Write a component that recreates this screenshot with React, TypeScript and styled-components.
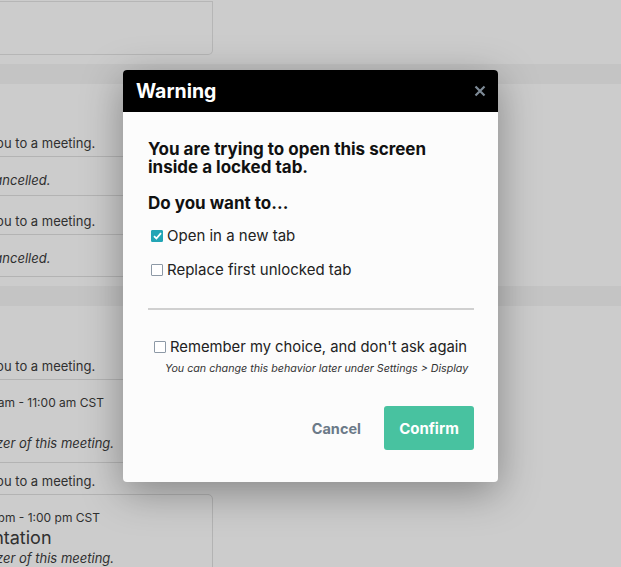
import styled, { createGlobalStyle } from "styled-components";

const GlobalStyle = createGlobalStyle`
  html, body {
    margin: 0;
    padding: 0;
  }
  body {
    font-family: Inter, "Open Sans", sans-serif;
    background: #fff;
    overflow: hidden;
  }
`;

const Page = styled.div`
  position: relative;
  width: 621px;
  height: 567px;
  overflow: hidden;
  background: #fff;
`;

const TopArea = styled.div`
  height: 64px;
  padding-top: 1px;
  box-sizing: border-box;
`;

const TopCard = styled.div`
  width: 213px;
  height: 54px;
  box-sizing: border-box;
  border: 1px solid #e4e4e4;
  border-left: none;
  border-radius: 0 0 5px 0;
`;

const Band = styled.div`
  height: 20px;
  background: #f5f5f5;
`;

/* the feed is scrolled sideways: only its right part shows */
const Feed = styled.div<{ $bottom?: number }>`
  display: flex;
  flex-direction: column;
  width: 355px;
  margin-left: -142px;
  padding-bottom: ${(p) => p.$bottom ?? 0}px;
`;

const DayHeading = styled.div<{ $height: number }>`
  height: ${(p) => p.$height}px;
`;

const InviteRow = styled.div<{ $height: number }>`
  height: ${(p) => p.$height}px;
  display: flex;
  align-items: flex-end;
  padding: 0 14px 5px;
  box-sizing: border-box;
  font-size: 13px;
  line-height: 16px;
  color: #3c3c3c;
  white-space: nowrap;
`;

const EventCard = styled.div<{ $height: number }>`
  height: ${(p) => p.$height}px;
  box-sizing: border-box;
  border: 1px solid #e0e0e0;
  border-radius: 5px;
  padding: 15px 14px 0;
  display: flex;
  flex-direction: column;
  white-space: nowrap;
  color: #3c3c3c;
`;

const Note = styled.div`
  font-size: 13px;
  line-height: 16px;
  font-style: italic;
`;

const Time = styled.div`
  font-size: 12px;
  line-height: 16px;
`;

const EventTitle = styled.div`
  font-size: 18px;
  line-height: 24px;
`;

const Overlay = styled.div`
  position: absolute;
  inset: 0;
  background: rgba(0, 0, 0, 0.2);
  display: flex;
  justify-content: center;
  align-items: flex-start;
  padding-top: 70px;
  box-sizing: border-box;
`;

const Modal = styled.div`
  width: 375px;
  background: #fcfcfc;
  border-radius: 4px;
  box-shadow: 0 10px 40px rgba(0, 0, 0, 0.35);
  overflow: hidden;
`;

const Header = styled.div`
  height: 42px;
  background: #000;
  display: flex;
  align-items: center;
  justify-content: space-between;
  padding: 0 12px 0 13px;
`;

const HeaderTitle = styled.h1`
  margin: 0;
  font-size: 19.5px;
  font-weight: 700;
  color: #fff;
`;

const CloseButton = styled.button`
  border: none;
  background: none;
  padding: 0;
  width: 12px;
  height: 12px;
  display: flex;
  cursor: pointer;
`;

const Body = styled.div`
  padding: 28px 24px 32px 25px;
`;

const Question = styled.p<{ $gap?: number }>`
  margin: ${(p) => p.$gap ?? 0}px 0 0;
  font-size: 17px;
  line-height: 18px;
  font-weight: 700;
  color: #111;
`;

const Options = styled.div`
  display: flex;
  flex-direction: column;
  gap: 14px;
  margin-top: 14px;
`;

const Option = styled.label<{ $indent: number; $size?: number }>`
  display: flex;
  align-items: center;
  gap: 4px;
  padding-left: ${(p) => p.$indent}px;
  font-size: ${(p) => p.$size ?? 15}px;
  line-height: 20px;
  color: #222;
`;

const Box = styled.span<{ $checked?: boolean }>`
  width: 12px;
  height: 12px;
  box-sizing: border-box;
  border-radius: 1px;
  border: 1px solid ${(p) => (p.$checked ? "#23a5b5" : "#8d99a6")};
  background: ${(p) => (p.$checked ? "#23a5b5" : "#fff")};
  display: flex;
  align-items: center;
  justify-content: center;
  flex-shrink: 0;
`;

const Divider = styled.hr`
  margin: 28px 0 27px;
  border: none;
  height: 2px;
  background: #d0d0d0;
`;

const Hint = styled.div`
  margin-top: 5px;
  padding-left: 17px;
  font-size: 10.7px;
  line-height: 14px;
  font-style: italic;
  color: #333;
  white-space: nowrap;
`;

const Actions = styled.div`
  margin-top: 30px;
  display: flex;
  justify-content: flex-end;
  align-items: center;
  gap: 11px;
`;

const Button = styled.button<{ $primary?: boolean }>`
  height: 44px;
  border: none;
  border-radius: 3px;
  font-family: inherit;
  font-size: ${(p) => (p.$primary ? "15px" : "14.5px")};
  font-weight: 700;
  cursor: pointer;
  padding: ${(p) => (p.$primary ? "0 15px" : "0 12px")};
  min-width: ${(p) => (p.$primary ? "90px" : "0")};
  background: ${(p) => (p.$primary ? "#48c2a0" : "transparent")};
  color: ${(p) => (p.$primary ? "#fff" : "#6b7a88")};
`;

function Check({ checked }: { checked?: boolean }) {
  return (
    <Box $checked={checked}>
      {checked && (
        <svg width="9" height="8" viewBox="0 0 9 8">
          <path d="M1 4.2 L3.4 6.5 L8 1.2" fill="none" stroke="#fff" strokeWidth="1.8" />
        </svg>
      )}
    </Box>
  );
}

export default function App() {
  return (
    <>
      <GlobalStyle />
      <Page>
        <TopArea>
          <TopCard />
        </TopArea>
        <Band />
        <Feed $bottom={9}>
          <DayHeading $height={36} />
          <InviteRow $height={36}>Jordan Lee invited you to a meeting.</InviteRow>
          <EventCard $height={40}>
            <Note>Your meeting was cancelled.</Note>
          </EventCard>
          <InviteRow $height={38}>Jordan Lee invited you to a meeting.</InviteRow>
          <EventCard $height={43}>
            <Note>Your meeting was cancelled.</Note>
          </EventCard>
        </Feed>
        <Band />
        <Feed>
          <DayHeading $height={37} />
          <InviteRow $height={36}>Jordan Lee invited you to a meeting.</InviteRow>
          <EventCard $height={84}>
            <Time>Thu, March 12 · 10:00 am - 11:00 am CST</Time>
            <EventTitle>Standup</EventTitle>
            <Note>You are a co-organizer of this meeting.</Note>
          </EventCard>
          <InviteRow $height={31}>Jordan Lee invited you to a meeting.</InviteRow>
          <EventCard $height={90}>
            <Time>Thu, March 12 · 12:00 pm - 1:00 pm CST</Time>
            <EventTitle>Product Presentation</EventTitle>
            <Note>You are a co-organizer of this meeting.</Note>
          </EventCard>
        </Feed>
        <Overlay>
          <Modal role="dialog">
            <Header>
              <HeaderTitle>Warning</HeaderTitle>
              <CloseButton aria-label="Close">
                <svg width="12" height="12" viewBox="0 0 12 12">
                  <path d="M1.5 1.5 L10.5 10.5 M10.5 1.5 L1.5 10.5" stroke="#7d8a96" strokeWidth="2.2" />
                </svg>
              </CloseButton>
            </Header>
            <Body>
              <Question>You are trying to open this screen inside a locked tab.</Question>
              <Question $gap={18}>Do you want to...</Question>
              <Options>
                <Option $indent={3}>
                  <Check checked />
                  Open in a new tab
                </Option>
                <Option $indent={3}>
                  <Check />
                  Replace first unlocked tab
                </Option>
              </Options>
              <Divider />
              <Option $indent={6} $size={14.8}>
                <Check />
                Remember my choice, and don't ask again
              </Option>
              <Hint>You can change this behavior later under Settings &gt; Display</Hint>
              <Actions>
                <Button>Cancel</Button>
                <Button $primary>Confirm</Button>
              </Actions>
            </Body>
          </Modal>
        </Overlay>
      </Page>
    </>
  );
}
